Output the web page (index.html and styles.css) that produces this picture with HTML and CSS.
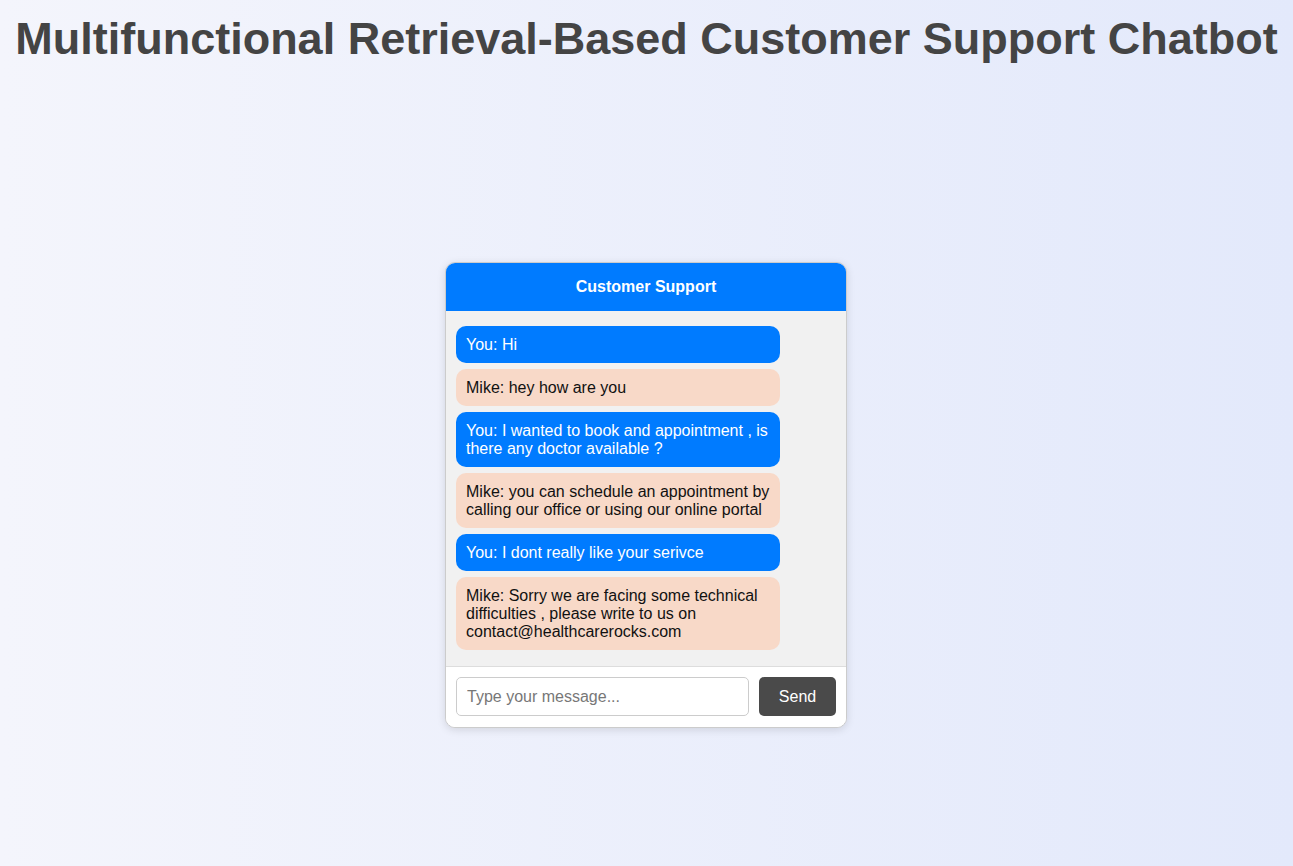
FILE: index.html
```html
<!DOCTYPE html>
<html lang="en">
<head>
<meta charset="UTF-8">
<title>Customer Support Chatbot</title>
<link rel="stylesheet" href="styles.css">
</head>
<body>
<h1 class="title">Multifunctional Retrieval-Based Customer Support Chatbot</h1>
<main class="stage">
  <div class="chat">
    <div class="chat-header">Customer Support</div>
    <div class="chat-messages">
      <div class="msg user">You: Hi</div>
      <div class="msg bot">Mike: hey how are you</div>
      <div class="msg user">You: I wanted to book and appointment , is there any doctor available ?</div>
      <div class="msg bot">Mike: you can schedule an appointment by calling our office or using our online portal</div>
      <div class="msg user">You: I dont really like your serivce</div>
      <div class="msg bot">Mike: Sorry we are facing some technical difficulties , please write to us on contact@healthcarerocks.com</div>
    </div>
    <div class="chat-input">
      <input class="text-input" type="text" placeholder="Type your message...">
      <button class="send-btn">Send</button>
    </div>
  </div>
</main>
</body>
</html>
```

FILE: styles.css
```css
html, body {
  margin: 0;
  padding: 0;
}
body {
  min-height: 100vh;
  display: flex;
  flex-direction: column;
  font-family: "Liberation Sans", Arial, sans-serif;
  background: linear-gradient(to right, #f4f5fc, #e3e9fb);
}
.title {
  margin: 11px 0 0;
  text-align: center;
  font-size: 45px;
  font-weight: bold;
  color: #444;
  line-height: 55px;
}
.stage {
  display: flex;
  justify-content: center;
  padding-top: 196px;
  padding-right: 1px;
}
.chat {
  width: 400px;
  background: #fff;
  border: 1px solid #ccc;
  border-radius: 10px;
  box-shadow: 0 2px 8px rgba(0,0,0,0.12);
  overflow: hidden;
}
.chat-header {
  background: #007bff;
  color: #fff;
  font-weight: bold;
  font-size: 16px;
  text-align: center;
  line-height: 18px;
  padding: 15px 0 15px;
}
.chat-messages {
  background: #f1f1f1;
  padding: 15px 10px 16px;
  display: flex;
  flex-direction: column;
  gap: 6px;
}
.msg {
  width: 324px;
  box-sizing: border-box;
  padding: 9.5px 10px;
  font-size: 16px;
  line-height: 18px;
  border-radius: 10px;
}
.msg.user {
  background: #007bff;
  color: #fff;
}
.msg.bot {
  background: #f8d9c8;
  color: #111;
}
.chat-input {
  display: flex;
  gap: 10px;
  padding: 10px 10px 11px;
  border-top: 1px solid #ddd;
  background: #fff;
}
.text-input {
  flex: 1;
  height: 39px;
  box-sizing: border-box;
  border: 1px solid #ccc;
  border-radius: 5px;
  padding: 0 10px;
  font-family: "Liberation Sans", Arial, sans-serif;
  font-size: 16px;
  color: #333;
}
.text-input::placeholder {
  color: #777;
}
.send-btn {
  width: 77px;
  height: 39px;
  border: none;
  border-radius: 5px;
  background: #4a4a4a;
  color: #fff;
  font-family: "Liberation Sans", Arial, sans-serif;
  font-size: 16px;
}
```
